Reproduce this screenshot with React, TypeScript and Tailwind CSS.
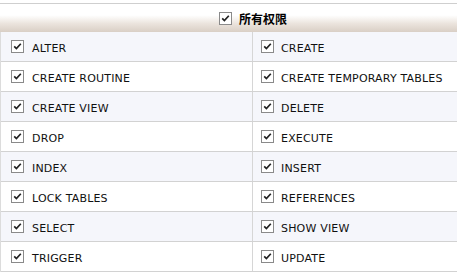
import React from "react";

const rows: [string, string][] = [
  ["ALTER", "CREATE"],
  ["CREATE ROUTINE", "CREATE TEMPORARY TABLES"],
  ["CREATE VIEW", "DELETE"],
  ["DROP", "EXECUTE"],
  ["INDEX", "INSERT"],
  ["LOCK TABLES", "REFERENCES"],
  ["SELECT", "SHOW VIEW"],
  ["TRIGGER", "UPDATE"],
];

function Check() {
  return (
    <span className="flex h-[13px] w-[13px] shrink-0 items-center justify-center border border-[#8a8a8a] bg-white">
      <svg width="9" height="9" viewBox="0 0 9 9">
        <path d="M1.2 4.4 L3.4 6.6 L7.8 1.8" fill="none" stroke="#222" strokeWidth="1.7" />
      </svg>
    </span>
  );
}

export default function App() {
  return (
    <div className="h-[273px] w-[457px] overflow-hidden bg-white pt-[3px] font-['DejaVu_Sans',sans-serif] text-[11px] tracking-[0.18px] text-[#111]">
      <div className="flex h-[29px] items-center border-t border-[#cfcfcf] bg-[linear-gradient(to_bottom,#ffffff_0%,#ffffff_40%,#ebe4dd_70%,#d9cfc5_100%)] pl-[219px]">
        <Check />
        <span className="ml-[7px] pt-[2px] font-['Noto_Sans_CJK_SC',sans-serif] text-[12px] font-bold tracking-normal text-black">
          所有权限
        </span>
      </div>
      <div className="border-l border-[#dcdcdc]">
        {rows.map(([left, right], i) => (
          <div
            key={left}
            className={`grid h-[30px] grid-cols-[251px_1fr] border-b border-[#d2d2d2] ${
              i % 2 === 0 ? "bg-[#f5f6fb]" : "bg-white"
            }`}
          >
            <div className="flex items-center gap-[8px] pl-[10px]">
              <Check />
              <span className="pt-[5px]">{left}</span>
            </div>
            <div className="flex items-center gap-[7px] border-l border-[#d6d6d6] pl-[8px]">
              <Check />
              <span className="pt-[5px]">{right}</span>
            </div>
          </div>
        ))}
      </div>
    </div>
  );
}
